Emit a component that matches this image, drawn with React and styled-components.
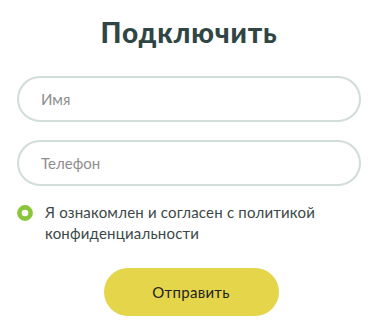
import React from "react";
import styled, { createGlobalStyle } from "styled-components";

const Global = createGlobalStyle`
  html, body { margin: 0; padding: 0; background: #fff; }
  body { font-family: "Lato", "Noto Sans", sans-serif; }
  * { box-sizing: border-box; }
`;

const Form = styled.form`
  width: 382px;
  padding: 14px 21px 0 17px;
  display: flex;
  flex-direction: column;
`;

const Title = styled.h2`
  margin: 0 0 26px;
  text-align: center;
  font-family: "Lato", sans-serif;
  font-weight: 900;
  font-size: 28px;
  line-height: 36px;
  letter-spacing: 0.8px;
  color: #2f4645;
`;

const Field = styled.input`
  display: block;
  width: 100%;
  height: 46px;
  margin-bottom: ${(p) => p.$gap}px;
  padding: 0 20px 0 22px;
  border: 2px solid #d2dcda;
  border-radius: 24px;
  font-family: "Lato", sans-serif;
  font-size: 15px;
  color: #333;
  outline: none;
  background: #fff;
  &::placeholder { color: #8e8e8e; }
`;

const Agree = styled.label`
  display: flex;
  align-items: flex-start;
  gap: 12px;
  margin: 0 0 24px;
  cursor: pointer;
`;

const Radio = styled.svg`
  display: block;
  flex: 0 0 16px;
  width: 16px;
  height: 16px;
  margin-top: 3px;
`;

const AgreeText = styled.span`
  font-size: 15px;
  line-height: 21px;
  color: #3b4848;
  letter-spacing: 0.2px;
`;

const Submit = styled.button`
  align-self: center;
  margin-left: 4px;
  width: 175px;
  height: 48px;
  border: none;
  border-radius: 24px;
  background: #e4d54b;
  font-family: "Lato", sans-serif;
  font-size: 15px;
  color: #1e2222;
  letter-spacing: 0.3px;
  cursor: pointer;
`;

export default function App() {
  return (
    <>
      <Global />
      <Form onSubmit={(e) => e.preventDefault()}>
        <Title>Подключить</Title>
        <Field placeholder="Имя" $gap={18} autoFocus />
        <Field placeholder="Телефон" $gap={16} />
        <Agree>
          <Radio viewBox="0 0 16 16" aria-hidden="true">
            <circle cx="8" cy="8" r="5.6" fill="none" stroke="#8cc43c" strokeWidth="4.6" />
          </Radio>
          <AgreeText>Я ознакомлен и согласен с политикой конфиденциальности</AgreeText>
        </Agree>
        <Submit type="submit">Отправить</Submit>
      </Form>
    </>
  );
}
